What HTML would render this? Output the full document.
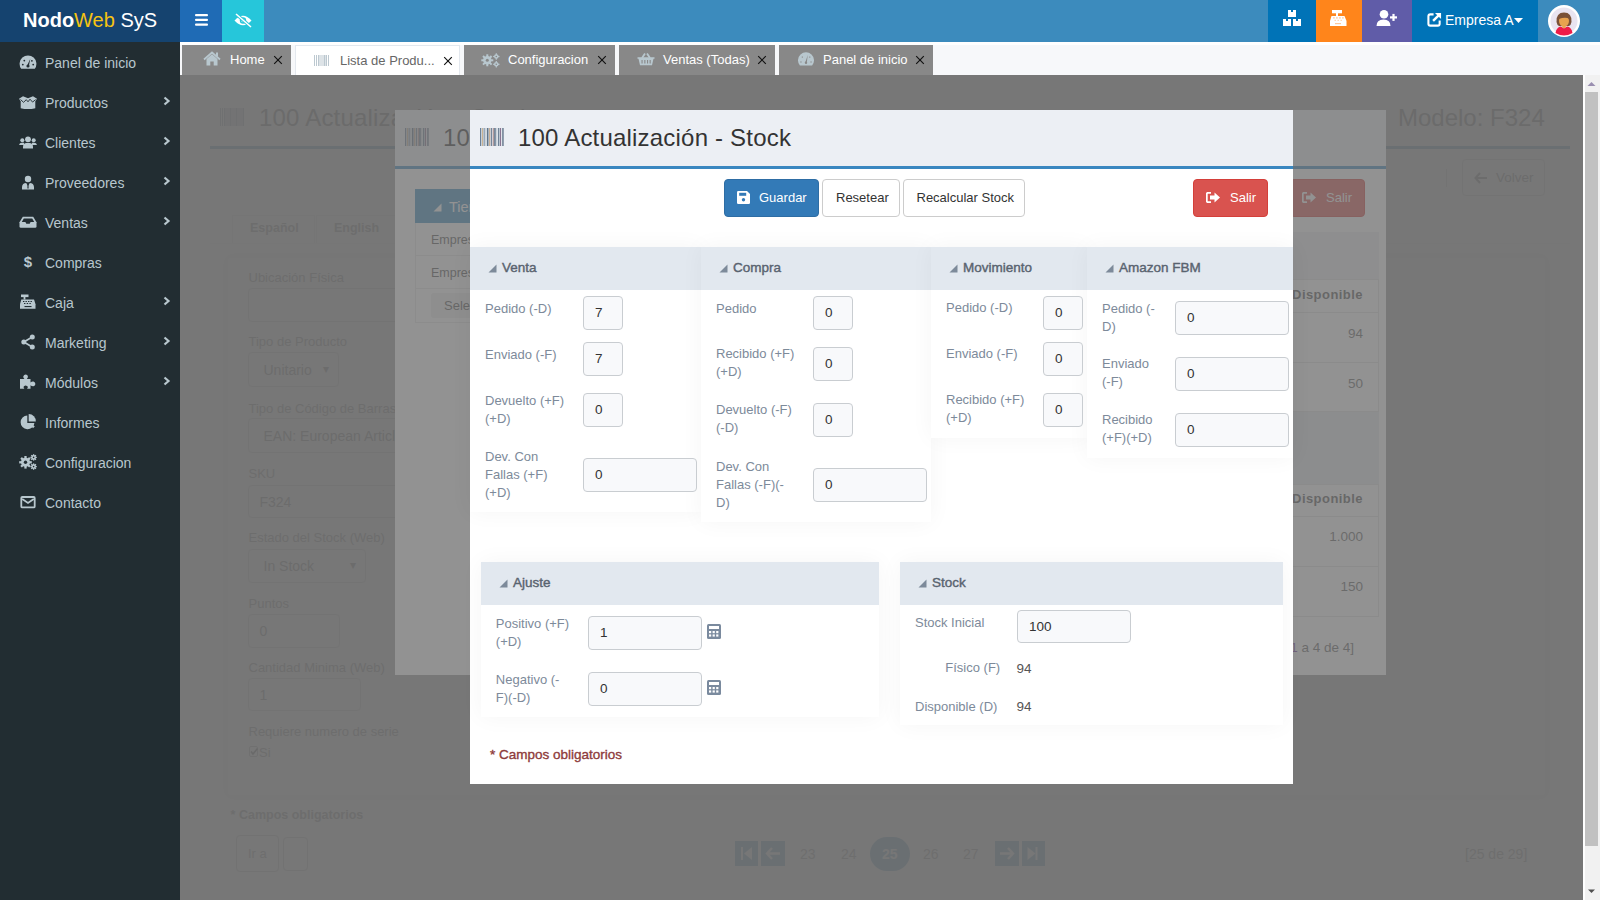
<!DOCTYPE html>
<html><head><meta charset="utf-8">
<style>
*{box-sizing:border-box}
html,body{margin:0;padding:0;width:1600px;height:900px;overflow:hidden;font-family:"Liberation Sans",sans-serif;background:#f7f8fa}
.abs{position:absolute}
#logo{left:0;top:0;width:180px;height:42px;background:#15436f;color:#fff;font-size:20px}
#logo span{position:absolute;left:23px;top:10px;line-height:20px;white-space:nowrap}
#logo .y{color:#f6c411}
#hdr{left:180px;top:0;width:1420px;height:42px;background:#3c8bbd}
.hb{position:absolute;top:0;height:42px}
#side{left:0;top:42px;width:180px;height:858px;background:#222d32}
.si{position:absolute;left:0;width:180px;height:40px;color:#b8c7ce;font-size:14px}
.si .t{position:absolute;left:45px;top:12px;line-height:16px;white-space:nowrap}
.si svg.ic{position:absolute;left:18px;top:12px}
.si svg.ch{position:absolute;left:161.5px;top:13px}
#tabbar{left:180px;top:42px;width:1420px;height:33px;background:#f7f8fa;border-top:3px solid #fff}
.tab{position:absolute;top:45px;height:30px;background:#888;color:#fff;font-size:13px}
.tab .t{position:absolute;top:7px;line-height:16px;white-space:nowrap}
.tab svg{position:absolute}
.tab svg.xx{top:9.5px}
#content{left:180px;top:75px;width:1403px;height:825px;background:#ecf0f5;overflow:hidden}
.a{position:absolute;white-space:nowrap}
#pg{position:absolute;left:-180px;top:-75px;width:1600px;height:900px;background:#fff}
.ov{position:absolute;left:0;top:0;width:1600px;height:900px}
#sb{left:1583px;top:75px;width:17px;height:825px;background:#f1f1f1}
</style></head><body>
<div id="logo" class="abs"><span><b>Nodo</b><span class="y" style="position:static">Web</span> SyS</span></div>
<div id="hdr" class="abs">
  <div class="hb" style="left:0;width:42px;background:#1f6bb5">
    <svg width="42" height="42" style="position:absolute;left:0;top:0"><rect x="15" y="14" width="13" height="2.3" rx="1" fill="#fff"/><rect x="15" y="18.7" width="13" height="2.3" rx="1" fill="#fff"/><rect x="15" y="23.4" width="13" height="2.3" rx="1" fill="#fff"/></svg>
  </div>
  <div class="hb" style="left:42px;width:42px;background:#26c6da">
    <svg width="42" height="42" style="position:absolute;left:0;top:0" viewBox="0 0 42 42"><path d="M12.5 20.5 Q21 11 29.5 20.5 Q21 30 12.5 20.5Z" fill="#fff"/><circle cx="21" cy="20.5" r="3.2" fill="#26c6da"/><circle cx="21" cy="20.5" r="1.8" fill="#fff"/><line x1="14" y1="14" x2="29" y2="27" stroke="#26c6da" stroke-width="3.2"/><line x1="14" y1="14" x2="29" y2="27" stroke="#fff" stroke-width="1.6"/></svg>
  </div>
  <div class="hb" style="left:1088px;width:48px;background:#0073b7">
    <svg width="48" height="42" style="position:absolute;left:0;top:0"><rect x="20" y="10" width="8" height="7" fill="#fff"/><rect x="15" y="19" width="8" height="7" fill="#fff"/><rect x="25" y="19" width="8" height="7" fill="#fff"/><rect x="23" y="10" width="2" height="2" fill="#0073b7"/><rect x="18" y="19" width="2" height="2" fill="#0073b7"/><rect x="28" y="19" width="2" height="2" fill="#0073b7"/></svg>
  </div>
  <div class="hb" style="left:1136px;width:46px;background:#ff851b">
    <svg width="46" height="42" style="position:absolute;left:0;top:0"><rect x="16" y="10" width="10" height="3.3" fill="#fff"/><rect x="20" y="13" width="2" height="3" fill="#fff"/><path d="M15.5 16 H28.5 L30.5 21 V26 H14 V21 Z" fill="#fff"/><g fill="#ffc89a"><rect x="17" y="17.3" width="1.8" height="1.2"/><rect x="20" y="17.3" width="1.8" height="1.2"/><rect x="23" y="17.3" width="1.8" height="1.2"/><rect x="26" y="17.3" width="1.8" height="1.2"/><rect x="18.5" y="19.8" width="1.4" height="1"/><rect x="21.5" y="19.8" width="1.4" height="1"/><rect x="24.5" y="19.8" width="1.4" height="1"/><rect x="19" y="23" width="6" height="1.2"/></g></svg>
  </div>
  <div class="hb" style="left:1182px;width:50px;background:#605ca8">
    <svg width="50" height="42" style="position:absolute;left:0;top:0"><circle cx="22" cy="14.2" r="4.3" fill="#fff"/><path d="M14.5 26 Q14.5 19.5 21.5 19.5 Q28.5 19.5 28.5 26 Z" fill="#fff"/><rect x="28" y="16.3" width="7" height="2.2" fill="#fff"/><rect x="30.4" y="13.9" width="2.2" height="7" fill="#fff"/></svg>
  </div>
  <div class="hb" style="left:1232px;width:126px;background:#0073b7;color:#fff;font-size:14px">
    <svg width="15" height="15" style="position:absolute;left:15px;top:11.5px" viewBox="0 0 16 16"><path d="M7 2.5 H3.5 Q1.5 2.5 1.5 4.5 V12.5 Q1.5 14.5 3.5 14.5 H11.5 Q13.5 14.5 13.5 12.5 V9" fill="none" stroke="#fff" stroke-width="2.2"/><path d="M8.5 1 H15 V7.5 Z" fill="#fff"/><path d="M13 3 L6.5 9.5" stroke="#fff" stroke-width="2.6"/></svg>
    <span style="position:absolute;left:33px;top:12px;line-height:16px">Empresa A</span>
    <svg width="10" height="6" style="position:absolute;left:102px;top:18px"><path d="M0 0 H9 L4.5 5 Z" fill="#fff"/></svg>
  </div>
  <svg width="34" height="34" style="position:absolute;left:1367px;top:4px" viewBox="0 0 34 34"><circle cx="17" cy="17" r="16" fill="#fff"/><circle cx="17" cy="17" r="13.5" fill="#e9e4f0"/><path d="M9.5 18 Q9 8.5 17 8.5 Q25 8.5 24.5 18 Q24 21 22 22 L12 22 Q10 21 9.5 18Z" fill="#7a5137"/><ellipse cx="17" cy="17" rx="5" ry="5.8" fill="#e8a24f"/><path d="M11.6 15 Q12.5 10 17 10.5 Q21.5 10 22.4 15 Q19 12.5 11.6 15Z" fill="#7a5137"/><path d="M8.5 29 Q9.5 23 14 22.5 L17 24.5 L20 22.5 Q24.5 23 25.5 29 Q21 31.5 17 31.5 Q13 31.5 8.5 29Z" fill="#ee1c47"/><rect x="15.3" y="21.5" width="3.4" height="2.5" fill="#e8a24f"/></svg>
</div>
<div id="side" class="abs">
<div class="si" style="top:1px"><svg class="ic" style="top:9.5px" width="20" height="20" viewBox="0 0 20 20"><path d="M3.2 15.8 A8.4 8.4 0 1 1 16.8 15.8 Z" fill="#b8c7ce"/><g fill="#222d32"><circle cx="4.8" cy="11.6" r="0.9"/><circle cx="6.3" cy="7.6" r="0.9"/><circle cx="15.2" cy="11.6" r="0.9"/><circle cx="13.9" cy="7.8" r="0.9"/><path d="M12.3 5.8 L10.9 12.8 L9.2 12.5 Z"/><circle cx="10" cy="13" r="1.6"/></g></svg><span class="t">Panel de inicio</span></div>
<div class="si" style="top:41px"><svg class="ic" style="top:9.5px" width="20" height="20" viewBox="0 0 20 20"><path d="M1 5.8 L5 3.2 L10 5.2 L15 3.2 L19 5.8 L17.3 8.2 L17.3 15.2 Q10 17 2.7 15.2 L2.7 8.2 Z" fill="#b8c7ce"/><path d="M2.5 6.5 L5.5 9.3 L8.3 6.7 L10 8.8 L12 6.2 L14.6 9.1 L17.6 6.6" fill="none" stroke="#222d32" stroke-width="0.9"/></svg><span class="t">Productos</span><svg class="ch" width="10" height="10" viewBox="0 0 10 10"><path d="M2.5 1.5 L6.5 5 L2.5 8.5" fill="none" stroke="#b8c7ce" stroke-width="2.2"/></svg></div>
<div class="si" style="top:81px"><svg class="ic" style="top:10px" width="20" height="20" viewBox="0 0 20 20"><circle cx="10" cy="6.3" r="2.9" fill="#b8c7ce"/><circle cx="4.3" cy="7.2" r="2" fill="#b8c7ce"/><circle cx="15.7" cy="7.2" r="2" fill="#b8c7ce"/><path d="M1 12 Q1.5 9.8 3.8 9.7 L6 9.7 L6 12Z" fill="#b8c7ce"/><path d="M19 12 Q18.5 9.8 16.2 9.7 L14 9.7 L14 12Z" fill="#b8c7ce"/><path d="M5 15.5 L5 13.5 Q5.3 10.1 8.4 9.9 H11.6 Q14.7 10.1 15 13.5 L15 15.5 Z" fill="#b8c7ce"/></svg><span class="t">Clientes</span><svg class="ch" width="10" height="10" viewBox="0 0 10 10"><path d="M2.5 1.5 L6.5 5 L2.5 8.5" fill="none" stroke="#b8c7ce" stroke-width="2.2"/></svg></div>
<div class="si" style="top:121px"><svg class="ic" style="top:9.5px" width="20" height="20" viewBox="0 0 20 20"><circle cx="10" cy="6" r="3.2" fill="#b8c7ce"/><path d="M4 16.5 L4 14 Q4.3 10.2 8.2 10 L10 13 L11.8 10 Q15.7 10.2 16 14 L16 16.5 Z" fill="#b8c7ce"/><path d="M9.5 11 L10.5 11 L10.6 15 L10 16 L9.4 15 Z" fill="#222d32"/></svg><span class="t">Proveedores</span><svg class="ch" width="10" height="10" viewBox="0 0 10 10"><path d="M2.5 1.5 L6.5 5 L2.5 8.5" fill="none" stroke="#b8c7ce" stroke-width="2.2"/></svg></div>
<div class="si" style="top:161px"><svg class="ic" style="top:8.5px" width="20" height="20" viewBox="0 0 20 20"><path d="M4.8 4.8 H15.2 L18.5 10.3 V14.5 Q18.5 15.8 17.2 15.8 H2.8 Q1.5 15.8 1.5 14.5 V10.3 Z" fill="#b8c7ce"/><path d="M5.8 6.6 H14.2 L16.2 10 H12.6 L11.7 11.8 H8.3 L7.4 10 H3.8 Z" fill="#222d32"/></svg><span class="t">Ventas</span><svg class="ch" width="10" height="10" viewBox="0 0 10 10"><path d="M2.5 1.5 L6.5 5 L2.5 8.5" fill="none" stroke="#b8c7ce" stroke-width="2.2"/></svg></div>
<div class="si" style="top:201px"><svg class="ic" style="top:8px" width="20" height="20" viewBox="0 0 20 20"><text x="10" y="15.5" font-family="Liberation Sans" font-weight="bold" font-size="15" fill="#b8c7ce" text-anchor="middle">$</text></svg><span class="t">Compras</span></div>
<div class="si" style="top:241px"><svg class="ic" style="top:8.5px" width="20" height="20" viewBox="0 0 20 20"><rect x="3" y="2.5" width="7.5" height="2.6" fill="#b8c7ce"/><rect x="5.6" y="5" width="1.8" height="2.5" fill="#b8c7ce"/><path d="M3.3 7.5 H16 L17.5 12.3 V16.8 H2 V12.3 Z" fill="#b8c7ce"/><g fill="#222d32"><rect x="5" y="9" width="1.4" height="1"/><rect x="7.5" y="9" width="1.4" height="1"/><rect x="10" y="9" width="1.4" height="1"/><rect x="12.5" y="9" width="1.4" height="1"/><rect x="6" y="11" width="1.4" height="1"/><rect x="8.7" y="11" width="1.4" height="1"/><rect x="11.4" y="11" width="1.4" height="1"/><rect x="6.5" y="14" width="7" height="1.1"/></g></svg><span class="t">Caja</span><svg class="ch" width="10" height="10" viewBox="0 0 10 10"><path d="M2.5 1.5 L6.5 5 L2.5 8.5" fill="none" stroke="#b8c7ce" stroke-width="2.2"/></svg></div>
<div class="si" style="top:281px"><svg class="ic" style="top:8.5px" width="20" height="20" viewBox="0 0 20 20"><g stroke="#b8c7ce" stroke-width="1.7"><line x1="14.3" y1="5" x2="5.8" y2="10"/><line x1="14.3" y1="15" x2="5.8" y2="10"/></g><circle cx="14.3" cy="5" r="2.5" fill="#b8c7ce"/><circle cx="5.8" cy="10" r="2.5" fill="#b8c7ce"/><circle cx="14.3" cy="15" r="2.5" fill="#b8c7ce"/></svg><span class="t">Marketing</span><svg class="ch" width="10" height="10" viewBox="0 0 10 10"><path d="M2.5 1.5 L6.5 5 L2.5 8.5" fill="none" stroke="#b8c7ce" stroke-width="2.2"/></svg></div>
<div class="si" style="top:321px"><svg class="ic" style="top:8.5px" width="20" height="20" viewBox="0 0 20 20"><path d="M2 7 H6.5 Q5 5.8 5.3 4.2 Q6 2.4 7.7 2.4 Q9.6 2.6 9.9 4.2 Q10.1 5.8 8.8 7 H12.5 V10.5 Q13.8 9.3 15.5 9.6 Q17.3 10.2 17.4 12 Q17.2 13.8 15.5 14.3 Q13.8 14.5 12.5 13.3 V16.8 H9 Q10 15.9 9.8 14.8 Q9.3 13.5 7.6 13.4 Q5.9 13.5 5.6 14.8 Q5.4 15.9 6.4 16.8 H2 Z" fill="#b8c7ce"/></svg><span class="t">Módulos</span><svg class="ch" width="10" height="10" viewBox="0 0 10 10"><path d="M2.5 1.5 L6.5 5 L2.5 8.5" fill="none" stroke="#b8c7ce" stroke-width="2.2"/></svg></div>
<div class="si" style="top:361px"><svg class="ic" style="top:9px" width="20" height="20" viewBox="0 0 20 20"><path d="M9.3 3.4 A6.9 6.9 0 1 0 16.4 10.9 H9.3 Z" fill="#b8c7ce"/><path d="M10.7 2 A7 7 0 0 1 17.8 9.4 H10.7 Z" fill="#b8c7ce"/><path d="M11.3 11.5 L16.8 14.3 A6.6 6.6 0 0 1 15 16.3 Z" fill="#b8c7ce"/></svg><span class="t">Informes</span></div>
<div class="si" style="top:401px"><svg class="ic" style="top:8.5px" width="20" height="20" viewBox="0 0 20 20"><g fill="#b8c7ce"><circle cx="7.5" cy="10.3" r="4.5"/><g stroke="#b8c7ce" stroke-width="2.3"><line x1="7.5" y1="4" x2="7.5" y2="16.6"/><line x1="1.2" y1="10.3" x2="13.8" y2="10.3"/><line x1="3.1" y1="5.9" x2="11.9" y2="14.7"/><line x1="3.1" y1="14.7" x2="11.9" y2="5.9"/></g><circle cx="15.6" cy="5.4" r="2.3"/><g stroke="#b8c7ce" stroke-width="1.3"><line x1="15.6" y1="2.2" x2="15.6" y2="8.6"/><line x1="12.4" y1="5.4" x2="18.8" y2="5.4"/><line x1="13.3" y1="3.1" x2="17.9" y2="7.7"/><line x1="13.3" y1="7.7" x2="17.9" y2="3.1"/></g><circle cx="15.6" cy="14.6" r="2.3"/><g stroke="#b8c7ce" stroke-width="1.3"><line x1="15.6" y1="11.4" x2="15.6" y2="17.8"/><line x1="12.4" y1="14.6" x2="18.8" y2="14.6"/><line x1="13.3" y1="12.3" x2="17.9" y2="16.9"/><line x1="13.3" y1="16.9" x2="17.9" y2="12.3"/></g></g><circle cx="7.5" cy="10.3" r="1.7" fill="#222d32"/><circle cx="15.6" cy="5.4" r="0.8" fill="#222d32"/><circle cx="15.6" cy="14.6" r="0.8" fill="#222d32"/></svg><span class="t">Configuracion</span></div>
<div class="si" style="top:441px"><svg class="ic" style="top:8.5px" width="20" height="20" viewBox="0 0 20 20"><rect x="3.3" y="5" width="13.4" height="10.4" rx="1" fill="none" stroke="#b8c7ce" stroke-width="1.8"/><path d="M4.2 7 L10 11 L15.8 7" fill="none" stroke="#b8c7ce" stroke-width="1.8"/></svg><span class="t">Contacto</span></div>
</div>
<div id="tabbar" class="abs"></div>
<div class="tab" style="left:182px;width:109px"><svg width="18" height="16" viewBox="0 0 18 16" style="left:21px;top:6px"><path d="M1 8.5 L9 1.5 L17 8.5" fill="none" stroke="#b8c7ce" stroke-width="1.8"/><rect x="13" y="1.5" width="2" height="4" fill="#b8c7ce"/><path d="M3.5 8 L9 3.3 L14.5 8 V14.5 H10.7 V10.5 H7.3 V14.5 H3.5 Z" fill="#b8c7ce"/></svg><span class="t" style="left:48px">Home</span><svg class="xx" width="10" height="10" viewBox="0 0 10 10" style="left:91px"><path d="M1.2 1.2 L8.8 8.8 M8.8 1.2 L1.2 8.8" stroke="#111" stroke-width="1.15"/></svg></div>
<div class="tab" style="left:295px;width:165px;background:#fff;border:1px solid #e3e8ee;border-bottom:none;color:#666"><svg width="16" height="12" viewBox="0 0 16 12" style="left:18px;top:9px"><rect x="0" y="0" width="1" height="11" fill="#bcc8d0"/><rect x="2" y="0" width="1" height="11" fill="#bcc8d0"/><rect x="4" y="0" width="1.5" height="11" fill="#bcc8d0"/><rect x="6.5" y="0" width="1" height="11" fill="#bcc8d0"/><rect x="8.5" y="0" width="1" height="11" fill="#bcc8d0"/><rect x="10" y="0" width="1" height="11" fill="#bcc8d0"/><rect x="11.5" y="0" width="1.5" height="11" fill="#bcc8d0"/><rect x="14" y="0" width="1" height="11" fill="#bcc8d0"/></svg><span class="t" style="left:44px">Lista de Produ...</span><svg class="xx" width="10" height="10" viewBox="0 0 10 10" style="left:147px"><path d="M1.2 1.2 L8.8 8.8 M8.8 1.2 L1.2 8.8" stroke="#111" stroke-width="1.15"/></svg></div>
<div class="tab" style="left:464px;width:151px"><svg width="20" height="16" viewBox="0 0 20 16" style="left:17px;top:7px"><g fill="#b8c7ce"><circle cx="6.3" cy="8.3" r="4.2"/><g stroke="#b8c7ce" stroke-width="2"><line x1="6.3" y1="2.3" x2="6.3" y2="14.3"/><line x1="0.3" y1="8.3" x2="12.3" y2="8.3"/><line x1="2" y1="4" x2="10.6" y2="12.6"/><line x1="2" y1="12.6" x2="10.6" y2="4"/></g><circle cx="15.3" cy="4.5" r="2.3"/><circle cx="15.3" cy="12.3" r="2.3"/><g stroke="#b8c7ce" stroke-width="1.2"><line x1="15.3" y1="1.3" x2="15.3" y2="7.7"/><line x1="12.1" y1="4.5" x2="18.5" y2="4.5"/><line x1="15.3" y1="9.1" x2="15.3" y2="15.5"/><line x1="12.1" y1="12.3" x2="18.5" y2="12.3"/></g></g><circle cx="6.3" cy="8.3" r="1.5" fill="#888"/><circle cx="15.3" cy="4.5" r="0.8" fill="#888"/><circle cx="15.3" cy="12.3" r="0.8" fill="#888"/></svg><span class="t" style="left:44px">Configuracion</span><svg class="xx" width="10" height="10" viewBox="0 0 10 10" style="left:133px"><path d="M1.2 1.2 L8.8 8.8 M8.8 1.2 L1.2 8.8" stroke="#111" stroke-width="1.15"/></svg></div>
<div class="tab" style="left:619px;width:156px"><svg width="18" height="15" viewBox="0 0 18 15" style="left:18px;top:7px"><path d="M5 6 L8 1.5 M13 6 L10 1.5" stroke="#b8c7ce" stroke-width="1.8"/><path d="M0.5 5.2 H17.5 V6.8 H16.5 L15 13.3 H3 L1.5 6.8 H0.5Z" fill="#b8c7ce"/><g fill="#888"><rect x="4.5" y="8" width="1.1" height="3.5"/><rect x="7.3" y="8" width="1.1" height="3.5"/><rect x="10" y="8" width="1.1" height="3.5"/><rect x="12.6" y="8" width="1.1" height="3.5"/></g></svg><span class="t" style="left:44px">Ventas (Todas)</span><svg class="xx" width="10" height="10" viewBox="0 0 10 10" style="left:138px"><path d="M1.2 1.2 L8.8 8.8 M8.8 1.2 L1.2 8.8" stroke="#111" stroke-width="1.15"/></svg></div>
<div class="tab" style="left:779px;width:154px"><svg width="18" height="15" viewBox="0 0 18 15" style="left:18px;top:7px"><path d="M2.9 13.5 A8 8 0 1 1 15.1 13.5 Z" fill="#b8c7ce"/><g fill="#888"><rect x="3.3" y="9.5" width="1.3" height="1"/><rect x="13.4" y="9.5" width="1.3" height="1"/><rect x="4.8" y="4.5" width="1" height="1.2"/><rect x="12.3" y="4.5" width="1" height="1.2"/><path d="M10.8 3 L9.8 10.5 L8.3 10.3 Z"/><circle cx="9" cy="10.8" r="1.2"/></g></svg><span class="t" style="left:44px">Panel de inicio</span><svg class="xx" width="10" height="10" viewBox="0 0 10 10" style="left:136px"><path d="M1.2 1.2 L8.8 8.8 M8.8 1.2 L1.2 8.8" stroke="#111" stroke-width="1.15"/></svg></div>
<div id="content" class="abs">
<div id="pg">
<!--PAGE-->
<div class="a" style="left:180px;top:75px;width:1403px;height:825px;background:#fff"></div>
<svg class="a" style="left:220px;top:108px" width="25" height="18"><rect x="0" y="0" width="1" height="18" fill="#8a9aa8"/><rect x="2" y="0" width="1" height="18" fill="#8a9aa8"/><rect x="4" y="0" width="1.5" height="18" fill="#8a9aa8"/><rect x="6.5" y="0" width="1" height="18" fill="#8a9aa8"/><rect x="8.5" y="0" width="1" height="18" fill="#8a9aa8"/><rect x="10" y="0" width="1.5" height="18" fill="#8a9aa8"/><rect x="12.5" y="0" width="1" height="18" fill="#8a9aa8"/><rect x="14.5" y="0" width="1" height="18" fill="#8a9aa8"/><rect x="16" y="0" width="1.5" height="18" fill="#8a9aa8"/><rect x="18.5" y="0" width="1" height="18" fill="#8a9aa8"/><rect x="20.5" y="0" width="1" height="18" fill="#8a9aa8"/><rect x="22.5" y="0" width="1.5" height="18" fill="#8a9aa8"/></svg>
<div class="a" style="left:259px;top:104.27px;font-size:24px;line-height:27.6px;color:#444;font-weight:normal;letter-spacing:0.2px">100 Actualización - Stock</div>
<div class="a" style="left:1398px;top:104.27px;font-size:24px;line-height:27.6px;color:#444;font-weight:normal;">Modelo: F324</div>
<div class="a" style="left:210px;top:146px;width:1360px;height:3px;background:#3c8dbc"></div>
<div class="a" style="left:1446px;top:169px;width:1px;height:18px;background:#c4c4c4"></div>
<div class="a" style="left:1462px;top:159px;width:83px;height:37px;background:#fff;border:1px solid #c4c4c4;border-radius:4px"></div>
<svg class="a" style="left:1474px;top:172px" width="14" height="12" viewBox="0 0 14 12"><path d="M6 1 L1.5 6 L6 11 M1.5 6 H13" fill="none" stroke="#555" stroke-width="2"/></svg>
<div class="a" style="left:1496px;top:170.28px;font-size:13.5px;line-height:15.52px;color:#555;font-weight:normal;">Volver</div>
<div class="a" style="left:210px;top:243px;width:1360px;height:1px;background:#eee"></div>
<div class="a" style="left:232px;top:215px;width:83px;height:28px;background:#fff;border:1px solid #e6e6e6;border-bottom:none"></div>
<div class="a" style="left:316px;top:215px;width:84px;height:28px;background:#fff;border:1px solid #e6e6e6;border-bottom:none"></div>
<div class="a" style="left:250px;top:220.68px;font-size:12.5px;line-height:14.37px;color:#666;font-weight:bold;">Español</div>
<div class="a" style="left:334px;top:220.68px;font-size:12.5px;line-height:14.37px;color:#666;font-weight:bold;">English</div>
<div class="a" style="left:228px;top:258px;width:1317px;height:537px;background:#fff;box-shadow:0 0 10px rgba(0,0,0,0.08);border-radius:3px"></div>
<div class="a" style="left:248.5px;top:271.43px;font-size:13px;line-height:14.95px;color:#666;font-weight:normal;">Ubicación Física</div>
<div class="a" style="left:248px;top:288px;width:752px;height:34px;background:#fff;border:1px solid #c8c8c8;border-radius:4px"></div>
<div class="a" style="left:248.5px;top:335.43px;font-size:13px;line-height:14.95px;color:#666;font-weight:normal;">Tipo de Producto</div>
<div class="a" style="left:248px;top:352px;width:91px;height:35px;background:#fff;border:1px solid #c8c8c8;border-radius:4px"></div>
<div class="a" style="left:263.5px;top:361.82px;font-size:14px;line-height:16.1px;color:#555;font-weight:normal;">Unitario</div>
<div class="a" style="left:323px;top:362.63px;font-size:12px;line-height:13.8px;color:#555;font-weight:normal;">▾</div>
<div class="a" style="left:248.5px;top:401.93px;font-size:13px;line-height:14.95px;color:#666;font-weight:normal;">Tipo de Código de Barras</div>
<div class="a" style="left:248px;top:418px;width:752px;height:35px;background:#fff;border:1px solid #c8c8c8;border-radius:4px"></div>
<div class="a" style="left:263.5px;top:427.82px;font-size:14px;line-height:16.1px;color:#555;font-weight:normal;">EAN: European Article Number</div>
<div class="a" style="left:248.5px;top:467.03px;font-size:13px;line-height:14.95px;color:#666;font-weight:normal;">SKU</div>
<div class="a" style="left:248px;top:485px;width:752px;height:33px;background:#fff;border:1px solid #c8c8c8;border-radius:4px"></div>
<div class="a" style="left:259.5px;top:493.82px;font-size:14px;line-height:16.1px;color:#555;font-weight:normal;">F324</div>
<div class="a" style="left:248.5px;top:531.23px;font-size:13px;line-height:14.95px;color:#666;font-weight:normal;">Estado del Stock (Web)</div>
<div class="a" style="left:248px;top:549px;width:118px;height:34px;background:#fff;border:1px solid #c8c8c8;border-radius:4px"></div>
<div class="a" style="left:263.5px;top:558.32px;font-size:14px;line-height:16.1px;color:#555;font-weight:normal;">In Stock</div>
<div class="a" style="left:350px;top:559.13px;font-size:12px;line-height:13.8px;color:#555;font-weight:normal;">▾</div>
<div class="a" style="left:248.5px;top:597.03px;font-size:13px;line-height:14.95px;color:#666;font-weight:normal;">Puntos</div>
<div class="a" style="left:248px;top:614px;width:92px;height:34px;background:#fff;border:1px solid #c8c8c8;border-radius:4px"></div>
<div class="a" style="left:259.5px;top:623.32px;font-size:14px;line-height:16.1px;color:#555;font-weight:normal;">0</div>
<div class="a" style="left:248.5px;top:660.73px;font-size:13px;line-height:14.95px;color:#666;font-weight:normal;">Cantidad Minima (Web)</div>
<div class="a" style="left:248px;top:678px;width:113px;height:33px;background:#fff;border:1px solid #c8c8c8;border-radius:4px"></div>
<div class="a" style="left:259.5px;top:686.82px;font-size:14px;line-height:16.1px;color:#555;font-weight:normal;">1</div>
<div class="a" style="left:248.5px;top:725.23px;font-size:13px;line-height:14.95px;color:#666;font-weight:normal;">Requiere numero de serie</div>
<div class="a" style="left:249px;top:746px;width:9px;height:11px;background:#fff;border:1px solid #999;border-radius:2px"></div>
<svg class="a" style="left:249px;top:746px" width="10" height="11"><path d="M2 5.5 L4 8 L8.5 2.5" fill="none" stroke="#333" stroke-width="1.6"/></svg>
<div class="a" style="left:259px;top:745.73px;font-size:13px;line-height:14.95px;color:#666;font-weight:normal;">Si</div>
<div class="a" style="left:230.6px;top:808.08px;font-size:12.5px;line-height:14.37px;color:#666;font-weight:bold;">* Campos obligatorios</div>
<div class="a" style="left:236px;top:835px;width:43px;height:37px;background:#fff;border:1px solid #b8b8b8;border-radius:4px"></div>
<div class="a" style="left:248px;top:847.23px;font-size:13px;line-height:14.95px;color:#777;font-weight:normal;">Ir a</div>
<div class="a" style="left:283px;top:837px;width:25px;height:34px;background:#fff;border:1px solid #b8b8b8;border-radius:4px"></div>
<div class="a" style="left:735px;top:841px;width:23px;height:25px;background:#3c8dbc"></div>
<div class="a" style="left:761px;top:841px;width:24px;height:25px;background:#3c8dbc"></div>
<div class="a" style="left:995px;top:841px;width:24px;height:25px;background:#3c8dbc"></div>
<div class="a" style="left:1022px;top:841px;width:23px;height:25px;background:#3c8dbc"></div>
<svg class="a" style="left:739px;top:846px" width="16" height="15"><rect x="2" y="1" width="2" height="13" fill="#fff"/><path d="M13 1 L5 7.5 L13 14Z" fill="#fff"/></svg>
<svg class="a" style="left:765px;top:846px" width="16" height="15"><path d="M7 2 L2 7.5 L7 13 M2 7.5 H15" fill="none" stroke="#fff" stroke-width="2.4"/></svg>
<svg class="a" style="left:999px;top:846px" width="16" height="15"><path d="M9 2 L14 7.5 L9 13 M14 7.5 H1" fill="none" stroke="#fff" stroke-width="2.4"/></svg>
<svg class="a" style="left:1026px;top:846px" width="14" height="15"><rect x="9.5" y="1" width="2" height="13" fill="#fff"/><path d="M1.5 1 L9.5 7.5 L1.5 14Z" fill="#fff"/></svg>
<div class="a" style="left:800px;top:846.32px;font-size:14px;line-height:16.1px;color:#777;font-weight:normal;">23</div>
<div class="a" style="left:841px;top:846.32px;font-size:14px;line-height:16.1px;color:#777;font-weight:normal;">24</div>
<div class="a" style="left:923px;top:846.32px;font-size:14px;line-height:16.1px;color:#777;font-weight:normal;">26</div>
<div class="a" style="left:963px;top:846.32px;font-size:14px;line-height:16.1px;color:#777;font-weight:normal;">27</div>
<div class="a" style="left:870px;top:837px;width:40px;height:34px;border-radius:17px;background:#3c8dbc"></div>
<div class="a" style="left:882px;top:846.32px;font-size:14px;line-height:16.1px;color:#fff;font-weight:bold;">25</div>
<div class="a" style="left:1465px;top:846.32px;font-size:14px;line-height:16.1px;color:#777;font-weight:normal;">[25 de 29]</div>
<!--/PAGE-->
<div class="ov" style="background:rgba(109,109,109,0.75)"></div>
<!--MODAL1-->
<div class="a" style="left:395px;top:110px;width:991px;height:565px;background:#fff"></div>
<div class="a" style="left:395px;top:110px;width:991px;height:56px;background:#eceff4"></div>
<div class="a" style="left:395px;top:166px;width:991px;height:3px;background:#3a87c0"></div>
<svg class="a" style="left:405px;top:128px" width="25" height="18"><rect x="0" y="0" width="1.3" height="18" fill="#6d8196"/><rect x="2" y="0" width="0.9" height="18" fill="#c7ad8a"/><rect x="3.5" y="0" width="1.3" height="18" fill="#8698aa"/><rect x="5.5" y="0" width="0.9" height="18" fill="#aab8c4"/><rect x="7" y="0" width="1.5" height="18" fill="#5f7488"/><rect x="9.3" y="0" width="0.9" height="18" fill="#b8946e"/><rect x="10.8" y="0" width="1.3" height="18" fill="#74869a"/><rect x="12.8" y="0" width="0.9" height="18" fill="#9a7a78"/><rect x="14.2" y="0" width="1.5" height="18" fill="#5c7186"/><rect x="16.4" y="0" width="0.9" height="18" fill="#b4c0ca"/><rect x="18" y="0" width="1.4" height="18" fill="#6f8296"/><rect x="20" y="0" width="1.1" height="18" fill="#8a7490"/><rect x="22.3" y="0" width="1.3" height="18" fill="#566b80"/></svg>
<div class="a" style="left:443px;top:123.97px;font-size:24px;line-height:27.6px;color:#333;font-weight:normal;letter-spacing:0.2px">100 Actualización - Stock</div>
<div class="a" style="left:415px;top:189px;width:485px;height:134px;background:#fff;border:1px solid #e5e5e5"></div>
<div class="a" style="left:415px;top:189px;width:485px;height:34px;background:#388cc0"></div>
<svg class="a" style="left:433px;top:203px" width="9" height="9"><path d="M8.5 0.5 V8.5 H0.5 Z" fill="#fff"/></svg>
<div class="a" style="left:449px;top:198.87px;font-size:14.5px;line-height:16.67px;color:#fff;font-weight:normal;">Tiendas</div>
<div class="a" style="left:415px;top:255px;width:485px;height:1px;background:#e8e8e8"></div>
<div class="a" style="left:415px;top:288px;width:485px;height:1px;background:#e8e8e8"></div>
<div class="a" style="left:431px;top:232.68px;font-size:12.5px;line-height:14.37px;color:#555;font-weight:normal;">Empresa A</div>
<div class="a" style="left:431px;top:265.68px;font-size:12.5px;line-height:14.37px;color:#555;font-weight:normal;">Empresa B</div>
<div class="a" style="left:431px;top:293px;width:89px;height:25px;background:#eee;border-radius:3px"></div>
<div class="a" style="left:444px;top:298.73px;font-size:13px;line-height:14.95px;color:#555;font-weight:normal;">Seleccionar</div>
<div class="a" style="left:1290px;top:179px;width:75px;height:38px;background:#d9534f;border:1px solid #d43f3a;border-radius:4px"></div>
<svg class="a" style="left:1302px;top:192px" width="15" height="11" viewBox="0 0 15 11"><path d="M5 0.8 H2 Q0.8 0.8 0.8 2 V9 Q0.8 10.2 2 10.2 H5" fill="none" stroke="#fff" stroke-width="1.8"/><path d="M4 3.5 H8.5 V0.5 L14 5.5 L8.5 10.5 V7.5 H4 Z" fill="#fff"/></svg>
<div class="a" style="left:1326px;top:190.53px;font-size:13px;line-height:14.95px;color:#fff;font-weight:normal;">Salir</div>
<div class="a" style="left:1000px;top:232px;width:379px;height:47px;background:#edf0f3"></div>
<div class="a" style="left:1000px;top:279px;width:379px;height:133px;background:#fff;border:1px solid #e4e4e4"></div>
<div class="a" style="left:1000px;top:312px;width:379px;height:1px;background:#e4e4e4"></div>
<div class="a" style="left:1000px;top:362px;width:379px;height:1px;background:#e4e4e4"></div>
<div class="a" style="right:237px;top:287.73px;font-size:13px;line-height:14.95px;color:#555;font-weight:bold;letter-spacing:0.45px">Stock Disponible</div>
<div class="a" style="right:237px;top:325.78px;font-size:13.5px;line-height:15.52px;color:#666;font-weight:normal;">94</div>
<div class="a" style="right:237px;top:375.78px;font-size:13.5px;line-height:15.52px;color:#666;font-weight:normal;">50</div>
<div class="a" style="left:1000px;top:412px;width:379px;height:72px;background:#e6eaee"></div>
<div class="a" style="left:1000px;top:484px;width:379px;height:133px;background:#fff;border:1px solid #e4e4e4"></div>
<div class="a" style="left:1000px;top:516px;width:379px;height:1px;background:#e4e4e4"></div>
<div class="a" style="left:1000px;top:566px;width:379px;height:1px;background:#e4e4e4"></div>
<div class="a" style="right:237px;top:492.03px;font-size:13px;line-height:14.95px;color:#555;font-weight:bold;letter-spacing:0.45px">Stock Disponible</div>
<div class="a" style="right:237px;top:529.08px;font-size:13.5px;line-height:15.52px;color:#666;font-weight:normal;">1.000</div>
<div class="a" style="right:237px;top:578.78px;font-size:13.5px;line-height:15.52px;color:#666;font-weight:normal;">150</div>
<div class="a" style="right:246px;top:640.28px;font-size:13.5px;line-height:15.52px;color:#666;font-weight:normal;">[<span style="color:#7b3f9e">1</span> a 4 de 4]</div>
<!--/MODAL1-->
<div class="ov" style="background:rgba(109,109,109,0.75)"></div>
<!--MODAL2-->
<div class="a" style="left:470px;top:110px;width:823px;height:674px;background:#fff"></div>
<div class="a" style="left:470px;top:110px;width:823px;height:56px;background:#eceff4"></div>
<div class="a" style="left:470px;top:166px;width:823px;height:3px;background:#3a87c0"></div>
<svg class="a" style="left:480px;top:128px" width="25" height="18"><rect x="0" y="0" width="1.3" height="18" fill="#6d8196"/><rect x="2" y="0" width="0.9" height="18" fill="#c7ad8a"/><rect x="3.5" y="0" width="1.3" height="18" fill="#8698aa"/><rect x="5.5" y="0" width="0.9" height="18" fill="#aab8c4"/><rect x="7" y="0" width="1.5" height="18" fill="#5f7488"/><rect x="9.3" y="0" width="0.9" height="18" fill="#b8946e"/><rect x="10.8" y="0" width="1.3" height="18" fill="#74869a"/><rect x="12.8" y="0" width="0.9" height="18" fill="#9a7a78"/><rect x="14.2" y="0" width="1.5" height="18" fill="#5c7186"/><rect x="16.4" y="0" width="0.9" height="18" fill="#b4c0ca"/><rect x="18" y="0" width="1.4" height="18" fill="#6f8296"/><rect x="20" y="0" width="1.1" height="18" fill="#8a7490"/><rect x="22.3" y="0" width="1.3" height="18" fill="#566b80"/></svg>
<div class="a" style="left:518px;top:123.97px;font-size:24px;line-height:27.6px;color:#333;font-weight:normal;letter-spacing:0.2px">100 Actualización - Stock</div>
<div class="a" style="left:724px;top:179px;width:95px;height:38px;background:#337ab7;border:1px solid #2e6da4;border-radius:4px"></div>
<svg class="a" style="left:737px;top:191px" width="13" height="13" viewBox="0 0 13 13"><path d="M0 1.2 Q0 0 1.2 0 H10 L13 3 V11.8 Q13 13 11.8 13 H1.2 Q0 13 0 11.8 Z" fill="#fff"/><rect x="2.2" y="1.8" width="7" height="3" fill="#337ab7"/><circle cx="6.5" cy="8.8" r="1.7" fill="#337ab7"/></svg>
<div class="a" style="left:759px;top:190.53px;font-size:13px;line-height:14.95px;color:#fff;font-weight:normal;">Guardar</div>
<div class="a" style="left:822px;top:179px;width:78px;height:38px;background:#fff;border:1px solid #ccc;border-radius:4px"></div>
<div class="a" style="left:836px;top:190.53px;font-size:13px;line-height:14.95px;color:#333;font-weight:normal;">Resetear</div>
<div class="a" style="left:903px;top:179px;width:122px;height:38px;background:#fff;border:1px solid #ccc;border-radius:4px"></div>
<div class="a" style="left:916.5px;top:190.53px;font-size:13px;line-height:14.95px;color:#333;font-weight:normal;">Recalcular Stock</div>
<div class="a" style="left:1193px;top:179px;width:75px;height:38px;background:#d9534f;border:1px solid #d43f3a;border-radius:4px"></div>
<svg class="a" style="left:1206px;top:192px" width="15" height="11" viewBox="0 0 15 11"><path d="M5 0.8 H2 Q0.8 0.8 0.8 2 V9 Q0.8 10.2 2 10.2 H5" fill="none" stroke="#fff" stroke-width="1.8"/><path d="M4 3.5 H8.5 V0.5 L14 5.5 L8.5 10.5 V7.5 H4 Z" fill="#fff"/></svg>
<div class="a" style="left:1230px;top:190.53px;font-size:13px;line-height:14.95px;color:#fff;font-weight:normal;">Salir</div>
<div class="a" style="left:470px;top:247px;width:231px;height:265px;background:#fff;box-shadow:0 0 22px rgba(0,0,0,0.045)"></div>
<div class="a" style="left:470px;top:247px;width:231px;height:43px;background:#e2e8ef"></div>
<svg class="a" style="left:488px;top:264px" width="9" height="9"><path d="M8.5 0.5 V8.5 H0.5 Z" fill="#7d8a9a"/></svg>
<div class="a" style="left:502px;top:260.08px;font-size:13.5px;line-height:15.52px;color:#59636f;font-weight:normal;-webkit-text-stroke:0.4px #59636f">Venta</div>
<div class="a" style="left:701px;top:247px;width:230px;height:275px;background:#fff;box-shadow:0 0 22px rgba(0,0,0,0.045)"></div>
<div class="a" style="left:701px;top:247px;width:230px;height:43px;background:#e2e8ef"></div>
<svg class="a" style="left:719px;top:264px" width="9" height="9"><path d="M8.5 0.5 V8.5 H0.5 Z" fill="#7d8a9a"/></svg>
<div class="a" style="left:733px;top:260.08px;font-size:13.5px;line-height:15.52px;color:#59636f;font-weight:normal;-webkit-text-stroke:0.4px #59636f">Compra</div>
<div class="a" style="left:931px;top:247px;width:156px;height:191px;background:#fff;box-shadow:0 0 22px rgba(0,0,0,0.045)"></div>
<div class="a" style="left:931px;top:247px;width:156px;height:43px;background:#e2e8ef"></div>
<svg class="a" style="left:949px;top:264px" width="9" height="9"><path d="M8.5 0.5 V8.5 H0.5 Z" fill="#7d8a9a"/></svg>
<div class="a" style="left:963px;top:260.08px;font-size:13.5px;line-height:15.52px;color:#59636f;font-weight:normal;-webkit-text-stroke:0.4px #59636f">Movimiento</div>
<div class="a" style="left:1087px;top:247px;width:206px;height:211px;background:#fff;box-shadow:0 0 22px rgba(0,0,0,0.045)"></div>
<div class="a" style="left:1087px;top:247px;width:206px;height:43px;background:#e2e8ef"></div>
<svg class="a" style="left:1105px;top:264px" width="9" height="9"><path d="M8.5 0.5 V8.5 H0.5 Z" fill="#7d8a9a"/></svg>
<div class="a" style="left:1119px;top:260.08px;font-size:13.5px;line-height:15.52px;color:#59636f;font-weight:normal;-webkit-text-stroke:0.4px #59636f">Amazon FBM</div>
<div class="a" style="left:481px;top:562px;width:398px;height:155px;background:#fff;box-shadow:0 0 22px rgba(0,0,0,0.045)"></div>
<div class="a" style="left:481px;top:562px;width:398px;height:43px;background:#e2e8ef"></div>
<svg class="a" style="left:499px;top:579px" width="9" height="9"><path d="M8.5 0.5 V8.5 H0.5 Z" fill="#7d8a9a"/></svg>
<div class="a" style="left:513px;top:575.08px;font-size:13.5px;line-height:15.52px;color:#59636f;font-weight:normal;-webkit-text-stroke:0.4px #59636f">Ajuste</div>
<div class="a" style="left:900px;top:562px;width:383px;height:163px;background:#fff;box-shadow:0 0 22px rgba(0,0,0,0.045)"></div>
<div class="a" style="left:900px;top:562px;width:383px;height:43px;background:#e2e8ef"></div>
<svg class="a" style="left:918px;top:579px" width="9" height="9"><path d="M8.5 0.5 V8.5 H0.5 Z" fill="#7d8a9a"/></svg>
<div class="a" style="left:932px;top:575.08px;font-size:13.5px;line-height:15.52px;color:#59636f;font-weight:normal;-webkit-text-stroke:0.4px #59636f">Stock</div>
<div class="a" style="left:485px;top:301.73px;font-size:13px;line-height:14.95px;color:#7d8a9a;font-weight:normal;">Pedido (-D)</div>
<div class="a" style="left:583px;top:296px;width:40px;height:34px;background:#f8f9fb;border:1px solid #c9cdd1;border-radius:4px"></div><div class="a" style="left:595px;top:305.28px;font-size:13.5px;line-height:15.52px;color:#333;font-weight:normal;">7</div>
<div class="a" style="left:485px;top:348.03px;font-size:13px;line-height:14.95px;color:#7d8a9a;font-weight:normal;">Enviado (-F)</div>
<div class="a" style="left:583px;top:342px;width:40px;height:34px;background:#f8f9fb;border:1px solid #c9cdd1;border-radius:4px"></div><div class="a" style="left:595px;top:351.28px;font-size:13.5px;line-height:15.52px;color:#333;font-weight:normal;">7</div>
<div class="a" style="left:485px;top:393.93px;font-size:13px;line-height:14.95px;color:#7d8a9a;font-weight:normal;">Devuelto (+F)</div><div class="a" style="left:485px;top:411.93px;font-size:13px;line-height:14.95px;color:#7d8a9a;font-weight:normal;">(+D)</div>
<div class="a" style="left:583px;top:393px;width:40px;height:34px;background:#f8f9fb;border:1px solid #c9cdd1;border-radius:4px"></div><div class="a" style="left:595px;top:402.28px;font-size:13.5px;line-height:15.52px;color:#333;font-weight:normal;">0</div>
<div class="a" style="left:485px;top:449.93px;font-size:13px;line-height:14.95px;color:#7d8a9a;font-weight:normal;">Dev. Con</div><div class="a" style="left:485px;top:467.93px;font-size:13px;line-height:14.95px;color:#7d8a9a;font-weight:normal;">Fallas (+F)</div><div class="a" style="left:485px;top:485.93px;font-size:13px;line-height:14.95px;color:#7d8a9a;font-weight:normal;">(+D)</div>
<div class="a" style="left:583px;top:458px;width:114px;height:34px;background:#f8f9fb;border:1px solid #c9cdd1;border-radius:4px"></div><div class="a" style="left:595px;top:467.28px;font-size:13.5px;line-height:15.52px;color:#333;font-weight:normal;">0</div>
<div class="a" style="left:716px;top:301.53px;font-size:13px;line-height:14.95px;color:#7d8a9a;font-weight:normal;">Pedido</div>
<div class="a" style="left:813px;top:296px;width:40px;height:34px;background:#f8f9fb;border:1px solid #c9cdd1;border-radius:4px"></div><div class="a" style="left:825px;top:305.28px;font-size:13.5px;line-height:15.52px;color:#333;font-weight:normal;">0</div>
<div class="a" style="left:716px;top:347.23px;font-size:13px;line-height:14.95px;color:#7d8a9a;font-weight:normal;">Recibido (+F)</div><div class="a" style="left:716px;top:365.23px;font-size:13px;line-height:14.95px;color:#7d8a9a;font-weight:normal;">(+D)</div>
<div class="a" style="left:813px;top:347px;width:40px;height:34px;background:#f8f9fb;border:1px solid #c9cdd1;border-radius:4px"></div><div class="a" style="left:825px;top:356.28px;font-size:13.5px;line-height:15.52px;color:#333;font-weight:normal;">0</div>
<div class="a" style="left:716px;top:403.23px;font-size:13px;line-height:14.95px;color:#7d8a9a;font-weight:normal;">Devuelto (-F)</div><div class="a" style="left:716px;top:421.23px;font-size:13px;line-height:14.95px;color:#7d8a9a;font-weight:normal;">(-D)</div>
<div class="a" style="left:813px;top:403px;width:40px;height:34px;background:#f8f9fb;border:1px solid #c9cdd1;border-radius:4px"></div><div class="a" style="left:825px;top:412.28px;font-size:13.5px;line-height:15.52px;color:#333;font-weight:normal;">0</div>
<div class="a" style="left:716px;top:459.93px;font-size:13px;line-height:14.95px;color:#7d8a9a;font-weight:normal;">Dev. Con</div><div class="a" style="left:716px;top:477.93px;font-size:13px;line-height:14.95px;color:#7d8a9a;font-weight:normal;">Fallas (-F)(-</div><div class="a" style="left:716px;top:495.93px;font-size:13px;line-height:14.95px;color:#7d8a9a;font-weight:normal;">D)</div>
<div class="a" style="left:813px;top:468px;width:114px;height:34px;background:#f8f9fb;border:1px solid #c9cdd1;border-radius:4px"></div><div class="a" style="left:825px;top:477.28px;font-size:13.5px;line-height:15.52px;color:#333;font-weight:normal;">0</div>
<div class="a" style="left:946px;top:301.23px;font-size:13px;line-height:14.95px;color:#7d8a9a;font-weight:normal;">Pedido (-D)</div>
<div class="a" style="left:1043px;top:296px;width:40px;height:34px;background:#f8f9fb;border:1px solid #c9cdd1;border-radius:4px"></div><div class="a" style="left:1055px;top:305.28px;font-size:13.5px;line-height:15.52px;color:#333;font-weight:normal;">0</div>
<div class="a" style="left:946px;top:347.23px;font-size:13px;line-height:14.95px;color:#7d8a9a;font-weight:normal;">Enviado (-F)</div>
<div class="a" style="left:1043px;top:342px;width:40px;height:34px;background:#f8f9fb;border:1px solid #c9cdd1;border-radius:4px"></div><div class="a" style="left:1055px;top:351.28px;font-size:13.5px;line-height:15.52px;color:#333;font-weight:normal;">0</div>
<div class="a" style="left:946px;top:392.73px;font-size:13px;line-height:14.95px;color:#7d8a9a;font-weight:normal;">Recibido (+F)</div><div class="a" style="left:946px;top:410.73px;font-size:13px;line-height:14.95px;color:#7d8a9a;font-weight:normal;">(+D)</div>
<div class="a" style="left:1043px;top:393px;width:40px;height:34px;background:#f8f9fb;border:1px solid #c9cdd1;border-radius:4px"></div><div class="a" style="left:1055px;top:402.28px;font-size:13.5px;line-height:15.52px;color:#333;font-weight:normal;">0</div>
<div class="a" style="left:1102px;top:301.93px;font-size:13px;line-height:14.95px;color:#7d8a9a;font-weight:normal;">Pedido (-</div><div class="a" style="left:1102px;top:319.93px;font-size:13px;line-height:14.95px;color:#7d8a9a;font-weight:normal;">D)</div>
<div class="a" style="left:1175px;top:301px;width:114px;height:34px;background:#f8f9fb;border:1px solid #c9cdd1;border-radius:4px"></div><div class="a" style="left:1187px;top:310.28px;font-size:13.5px;line-height:15.52px;color:#333;font-weight:normal;">0</div>
<div class="a" style="left:1102px;top:357.43px;font-size:13px;line-height:14.95px;color:#7d8a9a;font-weight:normal;">Enviado</div><div class="a" style="left:1102px;top:375.43px;font-size:13px;line-height:14.95px;color:#7d8a9a;font-weight:normal;">(-F)</div>
<div class="a" style="left:1175px;top:357px;width:114px;height:34px;background:#f8f9fb;border:1px solid #c9cdd1;border-radius:4px"></div><div class="a" style="left:1187px;top:366.28px;font-size:13.5px;line-height:15.52px;color:#333;font-weight:normal;">0</div>
<div class="a" style="left:1102px;top:413.23px;font-size:13px;line-height:14.95px;color:#7d8a9a;font-weight:normal;">Recibido</div><div class="a" style="left:1102px;top:431.23px;font-size:13px;line-height:14.95px;color:#7d8a9a;font-weight:normal;">(+F)(+D)</div>
<div class="a" style="left:1175px;top:413px;width:114px;height:34px;background:#f8f9fb;border:1px solid #c9cdd1;border-radius:4px"></div><div class="a" style="left:1187px;top:422.28px;font-size:13.5px;line-height:15.52px;color:#333;font-weight:normal;">0</div>
<div class="a" style="left:495.8px;top:616.53px;font-size:13px;line-height:14.95px;color:#7d8a9a;font-weight:normal;">Positivo (+F)</div><div class="a" style="left:495.8px;top:634.53px;font-size:13px;line-height:14.95px;color:#7d8a9a;font-weight:normal;">(+D)</div>
<div class="a" style="left:588px;top:616px;width:114px;height:34px;background:#f8f9fb;border:1px solid #c9cdd1;border-radius:4px"></div><div class="a" style="left:600px;top:625.28px;font-size:13.5px;line-height:15.52px;color:#333;font-weight:normal;">1</div>
<svg class="a" style="left:707px;top:624px" width="14" height="15" viewBox="0 0 14 15"><rect x="0" y="0" width="14" height="15" rx="1.5" fill="#7a8a9e"/><rect x="2" y="2" width="10" height="3" fill="#fff"/><rect x="2.0" y="7.0" width="2.2" height="2.2" fill="#fff"/><rect x="5.6" y="7.0" width="2.2" height="2.2" fill="#fff"/><rect x="9.2" y="7.0" width="2.2" height="2.2" fill="#fff"/><rect x="2.0" y="10.4" width="2.2" height="2.2" fill="#fff"/><rect x="5.6" y="10.4" width="2.2" height="2.2" fill="#fff"/><rect x="9.2" y="10.4" width="2.2" height="2.2" fill="#fff"/></svg>
<div class="a" style="left:495.8px;top:672.63px;font-size:13px;line-height:14.95px;color:#7d8a9a;font-weight:normal;">Negativo (-</div><div class="a" style="left:495.8px;top:690.63px;font-size:13px;line-height:14.95px;color:#7d8a9a;font-weight:normal;">F)(-D)</div>
<div class="a" style="left:588px;top:672px;width:114px;height:34px;background:#f8f9fb;border:1px solid #c9cdd1;border-radius:4px"></div><div class="a" style="left:600px;top:681.28px;font-size:13.5px;line-height:15.52px;color:#333;font-weight:normal;">0</div>
<svg class="a" style="left:707px;top:680px" width="14" height="15" viewBox="0 0 14 15"><rect x="0" y="0" width="14" height="15" rx="1.5" fill="#7a8a9e"/><rect x="2" y="2" width="10" height="3" fill="#fff"/><rect x="2.0" y="7.0" width="2.2" height="2.2" fill="#fff"/><rect x="5.6" y="7.0" width="2.2" height="2.2" fill="#fff"/><rect x="9.2" y="7.0" width="2.2" height="2.2" fill="#fff"/><rect x="2.0" y="10.4" width="2.2" height="2.2" fill="#fff"/><rect x="5.6" y="10.4" width="2.2" height="2.2" fill="#fff"/><rect x="9.2" y="10.4" width="2.2" height="2.2" fill="#fff"/></svg>
<div class="a" style="left:915px;top:615.63px;font-size:13px;line-height:14.95px;color:#7d8a9a;font-weight:normal;">Stock Inicial</div>
<div class="a" style="left:1017px;top:610px;width:114px;height:33px;background:#f8f9fb;border:1px solid #c9cdd1;border-radius:4px"></div><div class="a" style="left:1029px;top:618.78px;font-size:13.5px;line-height:15.52px;color:#333;font-weight:normal;">100</div>
<div class="a" style="left:945.3px;top:661.23px;font-size:13px;line-height:14.95px;color:#7d8a9a;font-weight:normal;">Físico (F)</div>
<div class="a" style="left:1016.6px;top:660.78px;font-size:13.5px;line-height:15.52px;color:#555;font-weight:normal;">94</div>
<div class="a" style="left:915px;top:699.63px;font-size:13px;line-height:14.95px;color:#7d8a9a;font-weight:normal;">Disponible (D)</div>
<div class="a" style="left:1016.6px;top:699.18px;font-size:13.5px;line-height:15.52px;color:#555;font-weight:normal;">94</div>
<div class="a" style="left:490px;top:747.38px;font-size:13.5px;line-height:15.52px;color:#8e3b3b;font-weight:normal;-webkit-text-stroke:0.35px #8e3b3b">* Campos obligatorios</div>
<!--/MODAL2-->
</div>
</div>
<div id="sb" class="abs"><div style="position:absolute;left:0;top:0;width:1.5px;height:825px;background:#fff"></div><div style="position:absolute;left:2px;top:17px;width:13px;height:754px;background:#c1c1c1"></div><svg style="position:absolute;left:0;top:0" width="17" height="17"><path d="M4.5 11 L8.5 7 L12.5 11 Z" fill="#9a8fb0"/></svg><svg style="position:absolute;left:0;top:808px" width="17" height="17"><path d="M5 6.5 L8.5 10 L12 6.5 Z" fill="#505050"/></svg></div>
</body></html>
